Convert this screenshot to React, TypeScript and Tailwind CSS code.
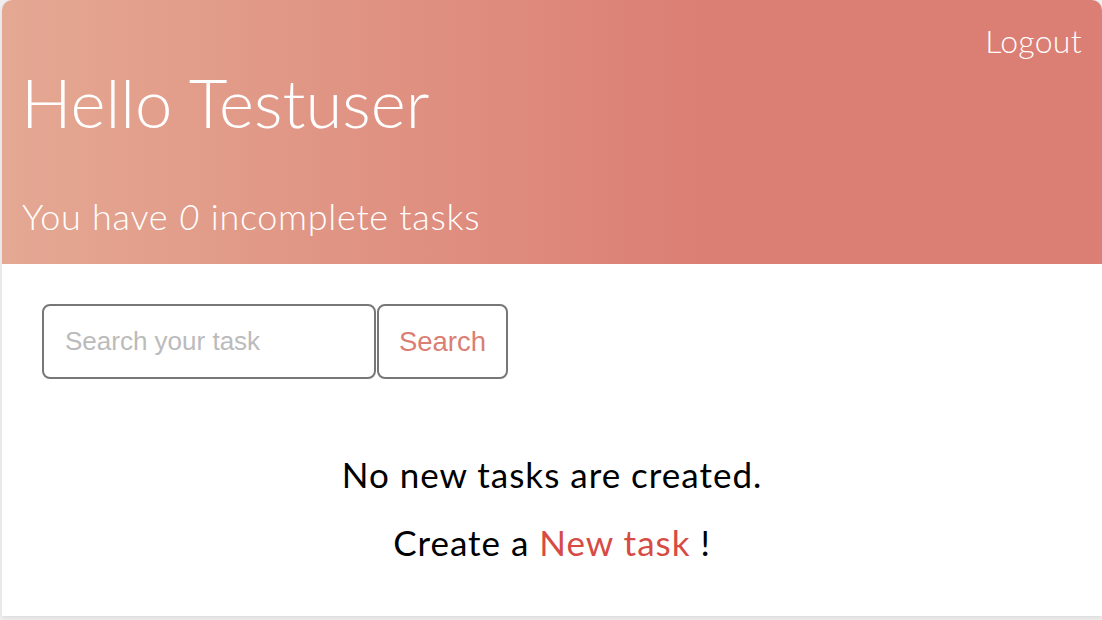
export default function App() {
  return (
    <div className="h-[620px] w-[1102px] overflow-hidden bg-[#efefef] pl-[2px] font-['Lato',sans-serif]">
      <div className="h-[616px] w-[1100px] rounded-t-[10px] bg-white shadow-[0_2px_4px_rgba(0,0,0,0.08)]">
        <header className="h-[264px] rounded-t-[10px] bg-linear-to-r from-[#e4a893] to-[#db7e73] to-65% pt-[25px] text-white">
          <div className="flex justify-end pr-[20px]">
            <a className="text-[32px] font-light leading-none tracking-[0.3px]">Logout</a>
          </div>
          <h1 className="mt-[12px] pl-[19px] text-[67px] font-light leading-none">Hello Testuser</h1>
          <p className="mt-[62px] pl-[20px] text-[36px] font-light leading-none tracking-[0.7px]">
            You have <em>0</em> incomplete tasks
          </p>
        </header>
        <main className="pt-[40px]">
          <div className="flex gap-[1px] pl-[40px]">
            <div className="flex h-[75px] w-[334px] items-center rounded-[8px] border-2 border-[#777] pl-[21px] font-['Liberation_Sans',sans-serif] text-[26px] text-[#bbbbbb]">
              Search your task
            </div>
            <button className="flex h-[75px] w-[131px] items-center justify-center rounded-[8px] border-2 border-[#777] font-['Liberation_Sans',sans-serif] text-[27.5px] text-[#db7e73]">
              Search
            </button>
          </div>
          <p className="mt-[78px] text-center text-[35px] leading-none tracking-[1px] text-black">No new tasks are created.</p>
          <p className="mt-[33px] text-center text-[35px] leading-none tracking-[1px] text-black">
            Create a <span className="text-[#d64c45]">New task</span> !
          </p>
        </main>
      </div>
    </div>
  );
}
